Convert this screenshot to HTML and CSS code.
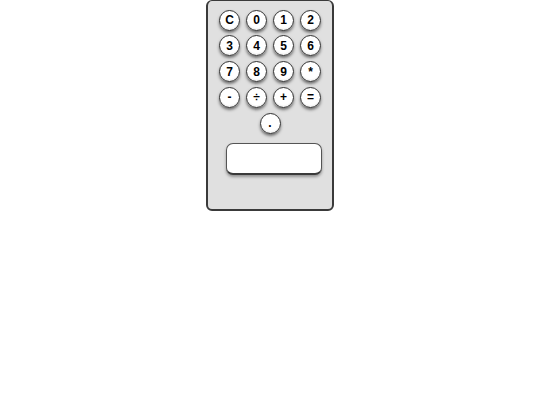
FILE: index.html
```html
<!DOCTYPE html>
<html lang="en">
<head>
    <meta charset="UTF-8">
    <meta name="viewport" content="width=device-width, initial-scale=1.0">
    <title>Calculator</title>
    <link rel="stylesheet" href="styles.css">
</head>
<body>

    <div class="calculator">
        <div class="keys">
            <button class="key">C</button>
            <button class="key">0</button>
            <button class="key">1</button>
            <button class="key">2</button>
            <button class="key">3</button>
            <button class="key">4</button>
            <button class="key">5</button>
            <button class="key">6</button>
            <button class="key">7</button>
            <button class="key">8</button>
            <button class="key">9</button>
            <button class="key">*</button>
            <button class="key">-</button>
            <button class="key">÷</button>
            <button class="key">+</button>
            <button class="key">=</button>
            <button class="key">.</button>
        </div>
        <div class="display"></div>
    </div>

</body>
</html>
```

FILE: styles.css
```css
body {
    font-family: 'Liberation Sans', Arial, sans-serif;
    background-color: #ffffff;
    margin: 0;
    padding: 0;
}
.calculator {
    width: 124px;
    height: 208px;
    margin: 0 auto;
    border: 2px solid #3a3a3a;
    border-top-width: 1px;
    border-radius: 6px;
    background-color: #e0e0e0;
}
.keys {
    display: flex;
    flex-wrap: wrap;
    justify-content: center;
    column-gap: 6px;
    row-gap: 4.75px;
    padding: 8.5px 8px 0;
}
.key {
    width: 21px;
    height: 21px;
    padding: 0;
    border: 1.5px solid #333;
    border-radius: 50%;
    background: radial-gradient(circle at 50% 40%, #ffffff 60%, #e4e4e4 85%, #bdbdbd 100%);
    box-shadow: 0 2px 3px rgba(0, 0, 0, 0.5);
    font-family: 'Liberation Sans', Arial, sans-serif;
    font-size: 12px;
    font-weight: bold;
    color: #000;
    line-height: 18px;
    cursor: pointer;
}
.display {
    width: 94px;
    height: 29px;
    margin: 9.5px 0 0 18px;
    background-color: #ffffff;
    border: 1px solid #555;
    border-bottom: 2px solid #3a3a3a;
    border-radius: 7px;
    box-shadow: 0 2px 3px rgba(0, 0, 0, 0.35);
}
```
